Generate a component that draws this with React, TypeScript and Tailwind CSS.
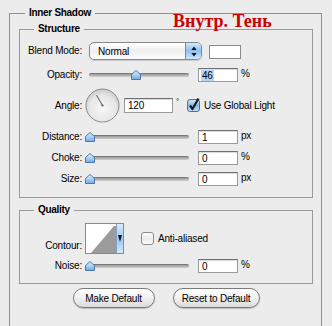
import React from "react";

function Slider({ value }: { value: number }) {
  return (
    <div className="relative flex h-[14px] w-[100px] items-center">
      <div className="h-[4px] w-full rounded-full border-t border-[#777] bg-gradient-to-b from-[#9a9a9a] to-[#cfcfcf]" />
      <svg
        className="absolute top-[2px]"
        style={{ left: value - 4 }}
        width="10"
        height="10"
        viewBox="0 0 10 10"
      >
        <defs>
          <linearGradient id={`th${value}`} x1="0" y1="0" x2="0" y2="1">
            <stop offset="0" stopColor="#e6f2fc" />
            <stop offset="0.5" stopColor="#a9d0f3" />
            <stop offset="1" stopColor="#6fa9e2" />
          </linearGradient>
        </defs>
        <path
          d="M0.5 9.5 V4.5 L5 0.5 L9.5 4.5 V9.5 Z"
          fill={`url(#th${value})`}
          stroke="#4d79a8"
          strokeWidth="1"
        />
      </svg>
    </div>
  );
}

function Field({
  value,
  width = "w-[40px]",
  selected = false,
  height = "h-[14px]",
}: {
  value: string;
  width?: string;
  selected?: boolean;
  height?: string;
}) {
  return (
    <div
      className={`${width} ${height} flex items-center border border-[#9a9a9a] border-t-[#6f6f6f] bg-white pl-[2px] shadow-[inset_0_1px_1px_rgba(0,0,0,0.15)]`}
    >
      <span className={selected ? "bg-[#b4d4fc] px-[1px] leading-[11px]" : "px-[1px] leading-[11px]"}>{value}</span>
    </div>
  );
}

function CheckBox({ checked }: { checked: boolean }) {
  return (
    <svg width="13" height="13" viewBox="0 0 13 13" className="shrink-0 overflow-visible">
      <defs>
        <linearGradient id={checked ? "cbOn" : "cbOff"} x1="0" y1="0" x2="0" y2="1">
          {checked ? (
            <>
              <stop offset="0" stopColor="#d2e7fb" />
              <stop offset="0.5" stopColor="#86bbee" />
              <stop offset="1" stopColor="#c6e2fb" />
            </>
          ) : (
            <>
              <stop offset="0" stopColor="#ffffff" />
              <stop offset="0.5" stopColor="#ececec" />
              <stop offset="1" stopColor="#fbfbfb" />
            </>
          )}
        </linearGradient>
      </defs>
      <rect
        x="0.5"
        y="0.5"
        width="12"
        height="12"
        rx="2.5"
        fill={`url(#${checked ? "cbOn" : "cbOff"})`}
        stroke={checked ? "#47739f" : "#8c8c8c"}
      />
      {checked && (
        <path d="M3 6.5 L5.5 10 L11.5 -0.5" fill="none" stroke="#1b1b1b" strokeWidth="2.2" strokeLinejoin="round" />
      )}
    </svg>
  );
}

function Dial() {
  return (
    <svg width="35" height="35" viewBox="0 0 35 35" className="shrink-0">
      <defs>
        <radialGradient id="dialG" cx="0.5" cy="0.6" r="0.55">
          <stop offset="0" stopColor="#f7f7f7" />
          <stop offset="0.75" stopColor="#e6e6e6" />
          <stop offset="1" stopColor="#cfcfcf" />
        </radialGradient>
      </defs>
      <circle cx="17.5" cy="17.5" r="16.5" fill="url(#dialG)" stroke="#8a8a8a" />
      <line x1="17.5" y1="17.5" x2="11.5" y2="7.2" stroke="#555" strokeWidth="1" />
      <circle cx="17.5" cy="17.5" r="1.1" fill="#555" />
    </svg>
  );
}

function Label({ children, extra = "" }: { children: React.ReactNode; extra?: string }) {
  return <span className={`w-[62px] shrink-0 text-right leading-[12px] ${extra}`}>{children}</span>;
}

function Button({ children, width }: { children: React.ReactNode; width: string }) {
  return (
    <div
      className={`${width} flex h-[20px] items-center justify-center rounded-full border border-[#7b7b7b] bg-gradient-to-b from-white via-[#f1f1f1] to-[#dadada] shadow-[0_1px_1px_rgba(0,0,0,0.2)]`}
    >
      {children}
    </div>
  );
}

export default function App() {
  return (
    <div className="relative h-[326px] w-[332px] overflow-hidden bg-[#ececec] pl-[9px] pt-[7px] font-['Liberation_Sans',Arial,sans-serif] text-[10px] tracking-[-0.2px] text-black">
      <fieldset className="h-[340px] w-[313px] border border-[#909090]">
        <legend className="ml-[15px] px-[4px] text-[10px] font-bold leading-[12px] tracking-[-0.3px]">Inner Shadow</legend>
        <div className="ml-[9px] mr-[8px]">
          {/* Structure */}
          <fieldset className="mt-[4px] border border-[#999]">
            <legend className="ml-[14px] px-[4px] font-bold leading-[12px] tracking-[-0.3px]">Structure</legend>
            <div className="flex flex-col pb-[11px]">
              <div className="mt-[7px] flex h-[18px] items-center">
                <Label extra="mr-[7px]">Blend Mode:</Label>
                <div className="flex h-[18px] w-[113px] overflow-hidden rounded-[5px] border border-[#888] bg-gradient-to-b from-white via-[#efefef] to-[#fdfdfd] shadow-[0_1px_1px_rgba(0,0,0,0.15)]">
                  <span className="flex flex-1 items-center pl-[8px]">Normal</span>
                  <div className="flex w-[16px] items-center justify-center border-l border-[#6c8db3] bg-gradient-to-b from-[#d5e8fb] via-[#8dbff0] to-[#cfe6fb]">
                    <svg width="6" height="11" viewBox="0 0 6 11">
                      <path d="M3 0.5 L5.6 4 H0.4 Z" fill="#111" />
                      <path d="M3 10.5 L5.6 7 H0.4 Z" fill="#111" />
                    </svg>
                  </div>
                </div>
                <div className="ml-[7px] mt-[2px] h-[14px] w-[32px] border border-[#8a8a8a] bg-white" />
              </div>

              <div className="mt-[8px] flex h-[14px] items-center">
                <Label extra="mr-[7px]">Opacity:</Label>
                <Slider value={46} />
                <div className="ml-[9px]">
                  <Field value="46" selected />
                </div>
                <span className="ml-[3px] self-start leading-[12px]">%</span>
              </div>

              <div className="mt-[6px] flex h-[35px] items-center">
                <Label extra="mr-[3px]">Angle:</Label>
                <Dial />
                <div className="ml-[4px] flex items-start">
                  <Field value="120" width="w-[49px]" height="h-[15px]" />
                  <span className="ml-[3px] text-[8px] leading-[8px]">°</span>
                </div>
                <div className="ml-[8px] flex items-center">
                  <CheckBox checked />
                  <span className="ml-[4px] leading-[12px]">Use Global Light</span>
                </div>
              </div>

              {[
                ["Distance:", "1", "px"],
                ["Choke:", "0", "%"],
                ["Size:", "0", "px"],
              ].map(([label, val, unit]) => (
                <div key={label} className="mt-[7px] flex h-[14px] items-center">
                  <Label extra="mr-[7px]">{label}</Label>
                  <Slider value={0} />
                  <div className="ml-[9px]">
                    <Field value={val} />
                  </div>
                  <span className="ml-[3px] self-start leading-[12px]">{unit}</span>
                </div>
              ))}
            </div>
          </fieldset>

          {/* Quality */}
          <fieldset className="mt-[6px] border border-[#999]">
            <legend className="ml-[14px] px-[4px] font-bold leading-[12px] tracking-[-0.3px]">Quality</legend>
            <div className="flex flex-col pb-[10px]">
              <div className="mt-[7px] flex h-[31px] items-center">
                <Label extra="mr-[3px] self-end mb-[2px]">Contour:</Label>
                <div className="flex h-[31px] w-[39px] overflow-hidden border border-[#8a8a8a] bg-white">
                  <svg width="30" height="29" viewBox="0 0 30 29" className="shrink-0">
                    <rect width="30" height="29" fill="#fff" />
                    <polygon points="5,29 28,2 30,2 30,29" fill="#9b9b9b" />
                  </svg>
                  <div className="flex flex-1 items-center justify-center border-l border-[#7fa3c9] bg-gradient-to-b from-[#dcecfb] via-[#9cc8f1] to-[#d3e8fb]">
                    <svg width="4" height="7" viewBox="0 0 4 7">
                      <path d="M0 0 H4 L2 7 Z" fill="#111" />
                    </svg>
                  </div>
                </div>
                <div className="ml-[17px] flex items-center">
                  <CheckBox checked={false} />
                  <span className="ml-[4px] leading-[12px]">Anti-aliased</span>
                </div>
              </div>

              <div className="mt-[5px] flex h-[14px] items-center">
                <Label extra="mr-[7px]">Noise:</Label>
                <Slider value={0} />
                <div className="ml-[9px]">
                  <Field value="0" />
                </div>
                <span className="ml-[3px] self-start leading-[12px]">%</span>
              </div>
            </div>
          </fieldset>

          <div className="mt-[4px] flex justify-center gap-[18px]">
            <Button width="w-[82px]">Make Default</Button>
            <Button width="w-[87px]">Reset to Default</Button>
          </div>
        </div>
      </fieldset>

      <span className="absolute left-[173px] top-[12px] font-['Liberation_Serif',serif] text-[18px] font-bold leading-[18px] tracking-normal text-[#cc0000]">
        Внутр. Тень
      </span>
    </div>
  );
}
